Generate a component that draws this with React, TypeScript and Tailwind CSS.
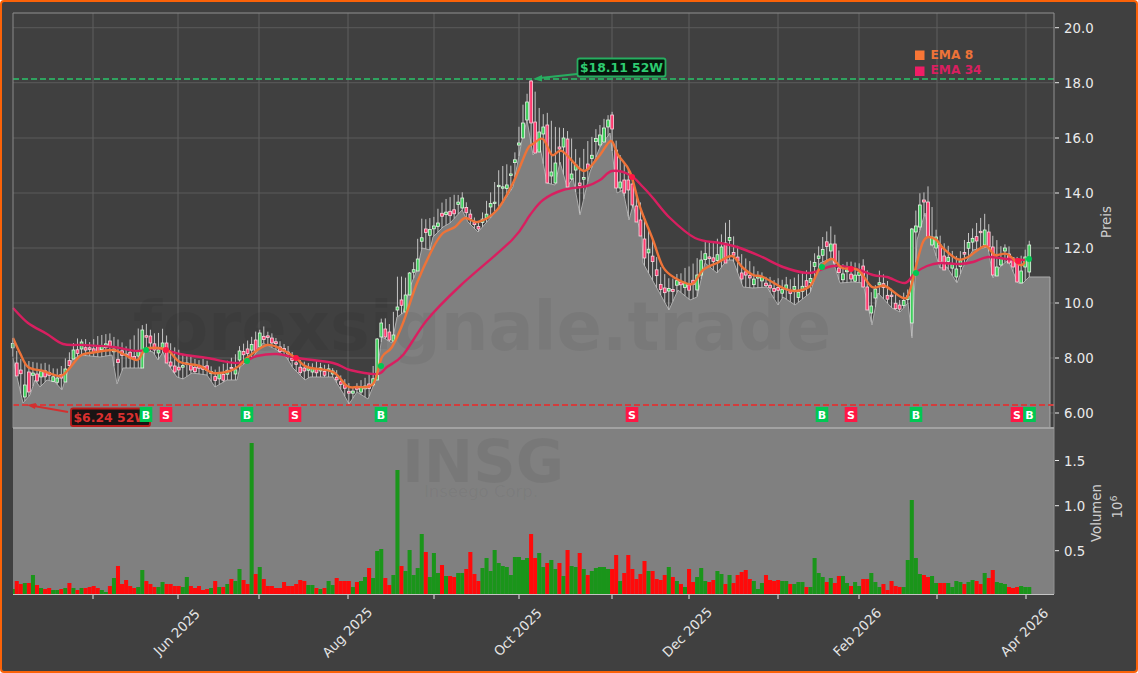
type Pt = [number, number];

const X0 = 12.7;
const STEP = 4.05;

// volume bar heights in px, positive = up day, negative = down day
const volumes = [
  5, -13, -10, 11, -11, 19, -9, 6, -5, -6, 4, 4, -5, 6, -11, 6, -4, 6, -6, -7,
  -8, -6, 4, 2, -8, 16, -28, -10, -14, -8, -6, 7, 24, -13, -10, -7, 7, 12, -10, -10,
  -8, -8, 7, 17, -8, -6, -8, -4, -5, 6, -13, 7, -7, 10, -15, 13, 25, -14, -10, 151,
  -20, 27, -15, -8, -8, -6, -6, -12, -8, -8, -10, -14, -13, 9, 9, -6, 5, -6, 13, 9,
  -16, -13, -13, -13, 7, -12, 13, 17, -26, 16, 43,
  45, -16, -9, 19, 124, -28, 23, 44, 19, 26, 60, -42, 17, 41, 21, -29, 18, -18, -17, 21,
  21, -25, -42, -20, -13, 26, 36, 23, 44, 31, 28, 27, 19, 37, 37, 34, 36, -60, -36, 41,
  27, -31, 34, 25, -31, 18, -44, 28, 27, -41, 25, -19, 23, 26, 27, 27, 25, -25, -39, 13,
  -21, -39, -25, -15, -20, -33, 23, -23, -15, -14, -19, 27, -17, 13, -10, 7, -25, -12, 17, 26,
  13, -12, -14, 23, 20, -10, 19, -11, -19, -22, -24, -15, 13, 5,
  11, -19, -14, -13, -14, 13, 13, -10, 10, 12, 12, -7, 7, 36, 21, 17, -12, 16, -11, -18,
  18, 11, -8, 12, 8, -15, -15, 21, 12, 7, -10, -4, -13, -8, -7, 7, 34, 94, 36, 20,
  -19, -17, 18, 11, -11, -11, 11, 7, 13, 12, -10, 12, 14, -13, -10, 21, -16, -24, 12, 11,
  10, -7, -6, -7, 8, 7, 7,
];

const lows: Pt[] = [
  [13, 358], [17, 377], [23, 403], [30, 395], [35, 380], [40, 387], [47, 380], [55, 382], [62, 390], [68, 370],
  [72, 360], [80, 355], [100, 357], [112, 355], [117, 384], [123, 368], [142, 368], [145, 350], [153, 352], [158, 360],
  [163, 352], [167, 363], [177, 377], [183, 379], [192, 373], [207, 375], [215, 387], [227, 380], [237, 380], [240, 367],
  [253, 357], [263, 343], [277, 350], [287, 358], [293, 368], [305, 380], [310, 377], [333, 377], [343, 393], [349, 404],
  [357, 392], [368, 399], [377, 377], [380, 350], [382, 337], [392, 343], [397, 317], [403, 313], [410, 287], [417, 270],
  [422, 248], [430, 250], [433, 237], [443, 227], [450, 223], [462, 210], [468, 222], [478, 232], [500, 207], [513, 187],
  [522, 140], [527, 120], [533, 155], [540, 147], [547, 183], [555, 185], [560, 162], [567, 187], [573, 178], [580, 215],
  [590, 172], [600, 147], [610, 133], [617, 193], [623, 190], [629, 220], [633, 205], [642, 237], [643, 263], [669, 310],
  [678, 290], [690, 300], [697, 297], [705, 263], [717, 273], [727, 260], [733, 260], [743, 287], [753, 288], [767, 287],
  [778, 305], [783, 297], [795, 305], [810, 293], [820, 263], [832, 258], [840, 283], [853, 282], [863, 283], [872, 325],
  [878, 293], [892, 308], [900, 312], [908, 303], [912, 338], [917, 240], [925, 213], [930, 237], [940, 268], [947, 267],
  [957, 283], [963, 267], [973, 250], [988, 247], [993, 278], [1000, 267], [1008, 260], [1018, 283], [1023, 283], [1029, 277],
  [1050, 277],
];

const highs: Pt[] = [
  [13, 340], [20, 362], [30, 363], [40, 365], [60, 372], [68, 355], [75, 342], [90, 343], [110, 335], [118, 340],
  [125, 350], [141, 328], [146, 326], [155, 335], [163, 332], [170, 345], [180, 355], [195, 360], [205, 362], [215, 372],
  [230, 362], [238, 352], [243, 345], [255, 335], [263, 328], [275, 340], [285, 345], [295, 358], [310, 365], [330, 365],
  [345, 383], [352, 390], [362, 380], [372, 375], [378, 340], [381, 320], [392, 326], [397, 278], [408, 280], [415, 258],
  [422, 218], [432, 222], [440, 205], [450, 198], [462, 195], [478, 225], [490, 195], [500, 170], [513, 165], [522, 110],
  [532, 80], [540, 115], [547, 115], [555, 130], [566, 130], [580, 160], [590, 140], [600, 125], [612, 113], [617, 150],
  [630, 175], [640, 205], [650, 235], [660, 270], [670, 280], [680, 275], [695, 265], [705, 245], [717, 243], [729, 220],
  [735, 245], [745, 260], [760, 275], [778, 282], [790, 280], [805, 275], [815, 255], [822, 240], [832, 228], [842, 265],
  [855, 265], [865, 262], [872, 300], [880, 272], [892, 290], [900, 302], [908, 290], [912, 225], [920, 195], [928, 190],
  [937, 235], [945, 245], [958, 258], [965, 240], [972, 232], [985, 215], [992, 235], [1000, 250], [1007, 245], [1015, 262],
  [1023, 255], [1029, 243],
];

// candles that stand out: x, body top, body bottom, up
const bigCandles: [number, number, number, boolean][] = [
  [17, 363, 376, false], [24, 385, 397, true], [28, 372, 392, false], [37, 374, 381, false], [66, 369, 382, true],
  [73, 350, 359, true], [82, 342, 349, true], [143, 330, 368, true], [151, 336, 343, false], [162, 343, 348, true],
  [167, 343, 363, false], [171, 362, 366, false], [175, 366, 372, false], [239, 351, 360, true], [256, 340, 351, false],
  [259, 333, 347, true], [377, 339, 380, true], [382, 323, 337, true], [386, 329, 337, false], [389, 332, 340, false],
  [393, 335, 341, true], [397, 307, 310, true], [405, 295, 312, true], [409, 273, 295, true], [417, 259, 271, true],
  [462, 198, 208, true], [522, 123, 138, true], [527, 102, 120, true], [531, 81, 123, false], [535, 122, 153, false],
  [539, 132, 152, true], [543, 127, 134, true], [548, 125, 183, false], [552, 172, 176, true], [556, 163, 183, true],
  [559, 147, 149, false], [563, 138, 147, true], [567, 139, 187, false], [572, 174, 179, true], [600, 135, 145, true],
  [605, 128, 142, true], [609, 120, 127, true], [613, 115, 129, false], [617, 150, 188, false], [621, 182, 188, true],
  [625, 180, 193, false], [629, 180, 190, false], [633, 184, 205, false], [637, 206, 222, false], [641, 220, 236, false],
  [644, 239, 258, false], [697, 275, 290, true], [702, 260, 275, true], [722, 247, 260, true], [725, 243, 263, false],
  [831, 244, 251, true], [836, 244, 263, false], [863, 266, 287, false], [868, 287, 310, false], [871, 306, 313, true],
  [875, 289, 298, true], [912, 229, 323, true], [917, 226, 232, true], [921, 205, 227, true], [924, 200, 202, false],
  [928, 202, 237, false], [932, 237, 245, true], [936, 237, 248, true], [940, 245, 262, false], [944, 256, 270, false],
  [956, 269, 277, true], [986, 230, 245, true], [989, 232, 247, false], [993, 247, 275, false], [997, 267, 276, true],
  [1001, 258, 265, true], [1005, 248, 251, true], [1009, 254, 263, false], [1013, 258, 267, false], [1017, 262, 282, false],
  [1021, 271, 283, true], [1025, 257, 267, true], [1029, 245, 272, true],
];

const ema8: Pt[] = [
  [13, 338], [20, 353], [28, 367], [43, 371], [60, 376], [68, 370], [80, 356], [90, 353], [113, 350], [123, 354],
  [137, 360], [143, 352], [148, 348], [167, 350], [180, 362], [200, 366], [213, 373], [230, 371], [240, 365], [248, 357],
  [267, 345], [283, 350], [297, 359], [307, 367], [333, 372], [347, 386], [357, 387], [373, 384], [382, 357], [392, 347],
  [403, 323], [417, 283], [433, 248], [443, 233], [455, 227], [465, 218], [478, 222], [497, 210], [513, 183], [527, 150],
  [533, 144], [543, 139], [552, 155], [562, 151], [580, 169], [588, 169], [600, 155], [611, 141], [618, 155], [630, 172],
  [640, 207], [653, 240], [663, 267], [675, 278], [692, 284], [703, 270], [717, 263], [732, 256], [742, 267], [753, 275],
  [763, 277], [783, 288], [795, 291], [810, 286], [820, 268], [832, 259], [842, 268], [858, 270], [872, 287], [885, 286],
  [903, 298], [910, 290], [923, 242], [935, 239], [943, 248], [957, 259], [968, 257], [985, 246], [995, 255], [1007, 254],
  [1020, 265], [1025, 262],
];

const ema34: Pt[] = [
  [13, 308], [28, 323], [47, 334], [63, 344], [83, 345], [113, 347], [138, 351], [157, 348], [180, 354], [207, 358],
  [238, 363], [257, 356], [277, 354], [297, 358], [333, 363], [350, 370], [377, 374], [387, 367], [403, 355], [427, 320],
  [460, 286], [512, 240], [530, 215], [543, 200], [563, 190], [587, 186], [600, 180], [612, 171], [630, 175], [643, 187],
  [653, 198], [670, 218], [695, 238], [720, 243], [737, 247], [760, 256], [783, 267], [807, 273], [820, 270], [833, 266],
  [853, 268], [873, 275], [887, 277], [905, 283], [915, 273], [927, 266], [940, 263], [960, 264], [973, 262], [988, 257],
  [1007, 259], [1025, 260],
];

const priceTicks = [
  ["20.0", 27.7], ["18.0", 82.7], ["16.0", 138], ["14.0", 193], ["12.0", 248], ["10.0", 303], ["8.00", 358], ["6.00", 413],
] as [string, number][];
const volumeTicks = [["1.5", 460.5], ["1.0", 505.7], ["0.5", 550.7]] as [string, number][];
const monthTicks = [93, 178, 259, 348, 434, 519, 612, 689, 778, 859, 937, 1026];
const monthLabels = [
  ["Jun 2025", 176.5], ["Aug 2025", 347], ["Oct 2025", 517.5], ["Dec 2025", 687], ["Feb 2026", 857], ["Apr 2026", 1024],
] as [string, number][];

const signals = [
  ["B", 146], ["S", 166], ["B", 247], ["S", 295], ["B", 381], ["S", 632], ["B", 822], ["S", 851], ["B", 916], ["S", 1017], ["B", 1029.5],
] as [string, number][];
const greenDots: Pt[] = [[146, 350], [247, 361], [381, 366], [822, 267], [916, 273], [1029, 259]];
const redDots: Pt[] = [[166, 350], [296, 358], [632, 177], [851, 269], [1018, 261]];

const points = (pts: Pt[]) => pts.map((p) => p.join(",")).join(" ");

// catmull-rom through the points, the EMAs are curves and not broken lines
function smooth(pts: Pt[]) {
  let d = `M${pts[0][0]} ${pts[0][1]}`;
  for (let i = 0; i < pts.length - 1; i++) {
    const p0 = pts[Math.max(i - 1, 0)];
    const p1 = pts[i];
    const p2 = pts[i + 1];
    const p3 = pts[Math.min(i + 2, pts.length - 1)];
    const c1x = p1[0] + (p2[0] - p0[0]) / 6;
    const c1y = p1[1] + (p2[1] - p0[1]) / 6;
    const c2x = p2[0] - (p3[0] - p1[0]) / 6;
    const c2y = p2[1] - (p3[1] - p1[1]) / 6;
    d += ` C${c1x.toFixed(1)} ${c1y.toFixed(1)} ${c2x.toFixed(1)} ${c2y.toFixed(1)} ${p2[0]} ${p2[1]}`;
  }
  return d;
}

function valueAt(pts: Pt[], x: number) {
  for (let i = 1; i < pts.length; i++) {
    if (x <= pts[i][0]) {
      const [x0, y0] = pts[i - 1];
      const [x1, y1] = pts[i];
      return y0 + ((y1 - y0) * (x - x0)) / (x1 - x0 || 1);
    }
  }
  return pts[pts.length - 1][1];
}

// small repeatable noise so the ordinary candles vary
const noise = (n: number) => {
  const v = Math.sin(n * 12.9898) * 43758.5453;
  return v - Math.floor(v);
};

const candles = volumes.map((vol, i) => {
  const x = X0 + i * STEP;
  let low = valueAt(lows, x);
  let high = Math.min(valueAt(highs, x) - noise(i + 900) * 4, low - 4);
  const span = low - high;
  let top = high + span * (0.3 + 0.35 * noise(i));
  let bottom = Math.min(top + 1.2 + noise(i + 500) * Math.min(span * 0.3, 5), low);
  let up = vol > 0;
  const big = bigCandles.find((c) => Math.abs(c[0] - x) <= STEP / 2);
  if (big) {
    top = big[1];
    bottom = big[2];
    up = big[3];
    high = Math.min(high, top - 1);
    low = Math.max(low, bottom);
  }
  return { x, low, high, top, bottom, up };
});

function Candle({ x, low, high, top, bottom, up }: (typeof candles)[number]) {
  return (
    <g>
      <line x1={x} x2={x} y1={high} y2={low} stroke="#c4c4c4" strokeWidth="1" />
      <rect
        x={x - 1.4}
        y={top}
        width="2.8"
        height={bottom - top}
        fill={up ? "#3fce5c" : "#ff3a70"}
        stroke={up ? "#e4f4e4" : "#fbd6df"}
        strokeWidth="0.8"
      />
    </g>
  );
}

export default function App() {
  return (
    <div className="w-[1138px] h-[673px] bg-white">
      <div className="w-full h-full rounded-[4px] border-2 border-[#fb6208] bg-[#404040] overflow-hidden">
        <svg viewBox="2 2 1134 669" className="block w-[1134px] h-[669px] font-['DejaVu_Sans',sans-serif]">
          {/* price grid */}
          {priceTicks.map(([, y]) => (
            <line key={y} x1="13" x2="1054" y1={y} y2={y} stroke="#5b5b5b" strokeWidth="1" />
          ))}
          {monthTicks.map((x) => (
            <line key={x} x1={x} x2={x} y1="13" y2="428" stroke="#5f5f5f" strokeWidth="1" />
          ))}

          {/* grey area under the lows */}
          <polygon points={`13,428 ${points(lows)} 1050,428`} fill="#808080" />
          <polyline points={`${points(lows)} 1050,428`} fill="none" stroke="#acacac" strokeWidth="1" />

          {/* volume panel */}
          <rect x="13" y="428" width="1041" height="166" fill="#808080" />
          {volumes.map((v, i) => (
            <rect
              key={i}
              x={Math.max(13, X0 + i * STEP - STEP / 2)}
              y={594 - Math.abs(v)}
              width={i === 0 ? 2 : STEP}
              height={Math.abs(v)}
              fill={v > 0 ? "#1a951a" : "#ff0a0a"}
            />
          ))}

          {/* watermarks */}
          <text x="133" y="350" fontSize="67" fontWeight="700" fill="#000" fillOpacity="0.055">
            forexsignale.trade
          </text>
          <text x="483" y="482" fontSize="59" fontWeight="700" textAnchor="middle" fill="#000" fillOpacity="0.06">
            INSG
          </text>
          <text x="481" y="497" fontSize="16.5" textAnchor="middle" fill="#000" fillOpacity="0.05">
            Inseego Corp.
          </text>

          {candles.map((c, i) => (
            <Candle key={i} {...c} />
          ))}

          {/* moving averages */}
          <path d={smooth(ema34)} fill="none" stroke="#d81f60" strokeWidth="2.4" strokeLinejoin="round" />
          <path d={smooth(ema8)} fill="none" stroke="#ee7338" strokeWidth="2.4" strokeLinejoin="round" />
          {greenDots.map(([x, y]) => (
            <circle key={x} cx={x} cy={y} r="3" fill="#00c853" />
          ))}
          {redDots.map(([x, y]) => (
            <circle key={x} cx={x} cy={y} r="3" fill="#ff1744" />
          ))}

          {/* 52 week high and low */}
          <line x1="13" x2="1054" y1="79" y2="79" stroke="#2fa35f" strokeWidth="1.8" strokeDasharray="6 3" />
          <line x1="13" x2="1054" y1="405" y2="405" stroke="#d33c3c" strokeWidth="1.8" strokeDasharray="6 3" />

          <line x1="577" y1="74" x2="540" y2="78" stroke="#27ae60" strokeWidth="1.8" />
          <polygon points="533,79 542,75 542,81.5" fill="#27ae60" />
          <rect x="577.5" y="58.5" width="88" height="18" rx="2" fill="#06140c" stroke="#27ae60" strokeWidth="1.8" />
          <text x="621.5" y="72" fontSize="12.4" fontWeight="700" textAnchor="middle" fill="#2ecc71">
            $18.11 52W
          </text>

          <line x1="68" y1="412" x2="34" y2="406" stroke="#d32f2f" strokeWidth="1.8" />
          <polygon points="27,405 36,403 35,409" fill="#d32f2f" />
          <rect x="71" y="408.5" width="79" height="17.5" rx="2" fill="#1a1414" stroke="#b71c1c" strokeWidth="1.8" />
          <text x="73.5" y="422" fontSize="12.4" fontWeight="700" fill="#d9302f">
            $6.24 52W
          </text>

          {/* buy and sell flags */}
          {signals.map(([label, x]) => (
            <g key={x}>
              <rect x={x - 6.3} y="407" width="12.6" height="15" fill={label === "B" ? "#00c853" : "#ff1744"} />
              <text x={x} y="418.5" fontSize="11" fontWeight="700" textAnchor="middle" fill="#fff">
                {label}
              </text>
            </g>
          ))}

          {/* legend */}
          <rect x="915" y="50.5" width="9.5" height="9.5" fill="#f97636" />
          <text x="930.5" y="58.5" fontSize="12.2" fontWeight="700" fill="#ee7338">
            EMA 8
          </text>
          <rect x="915" y="66.5" width="9.5" height="9.5" fill="#f01d66" />
          <text x="930.5" y="74" fontSize="12.2" fontWeight="700" fill="#d81f60">
            EMA 34
          </text>

          {/* spines */}
          <path d="M13 13 H1054 V594" fill="none" stroke="#909090" strokeWidth="1" />
          <line x1="13" x2="13" y1="13" y2="428" stroke="#8a8a8a" strokeWidth="1" />
          <line x1="13" x2="1054" y1="428" y2="428" stroke="#a2a2a2" strokeWidth="2" />
          <line x1="13" x2="1054" y1="594.5" y2="594.5" stroke="#c4c4c4" strokeWidth="1" />

          {/* axes */}
          {[...priceTicks, ...volumeTicks].map(([label, y]) => (
            <g key={label}>
              <line x1="1055" x2="1059" y1={y} y2={y} stroke="#e8e8e8" strokeWidth="1" />
              <text x="1064" y={y + 5} fontSize="13.3" fill="#eaeaea">
                {label}
              </text>
            </g>
          ))}
          {monthTicks.map((x) => (
            <line key={x} x1={x} x2={x} y1="595" y2="599" stroke="#e8e8e8" strokeWidth="1" />
          ))}
          {monthLabels.map(([label, x]) => (
            <text
              key={label}
              x={x}
              y="637"
              fontSize="13.3"
              textAnchor="middle"
              fill="#e6e6e6"
              transform={`rotate(-45 ${x} 632)`}
            >
              {label}
            </text>
          ))}

          <text x="1111" y="222" fontSize="13.3" textAnchor="middle" fill="#cfcfcf" transform="rotate(-90 1111 222)">
            Preis
          </text>
          <text x="1101" y="513" fontSize="13.3" textAnchor="middle" fill="#cfcfcf" transform="rotate(-90 1101 513)">
            Volumen
          </text>
          <text x="1122" y="507" fontSize="13.3" textAnchor="middle" fill="#cfcfcf" transform="rotate(-90 1122 507)">
            10
            <tspan fontSize="9.5" dy="-5">
              6
            </tspan>
          </text>
        </svg>
      </div>
    </div>
  );
}
